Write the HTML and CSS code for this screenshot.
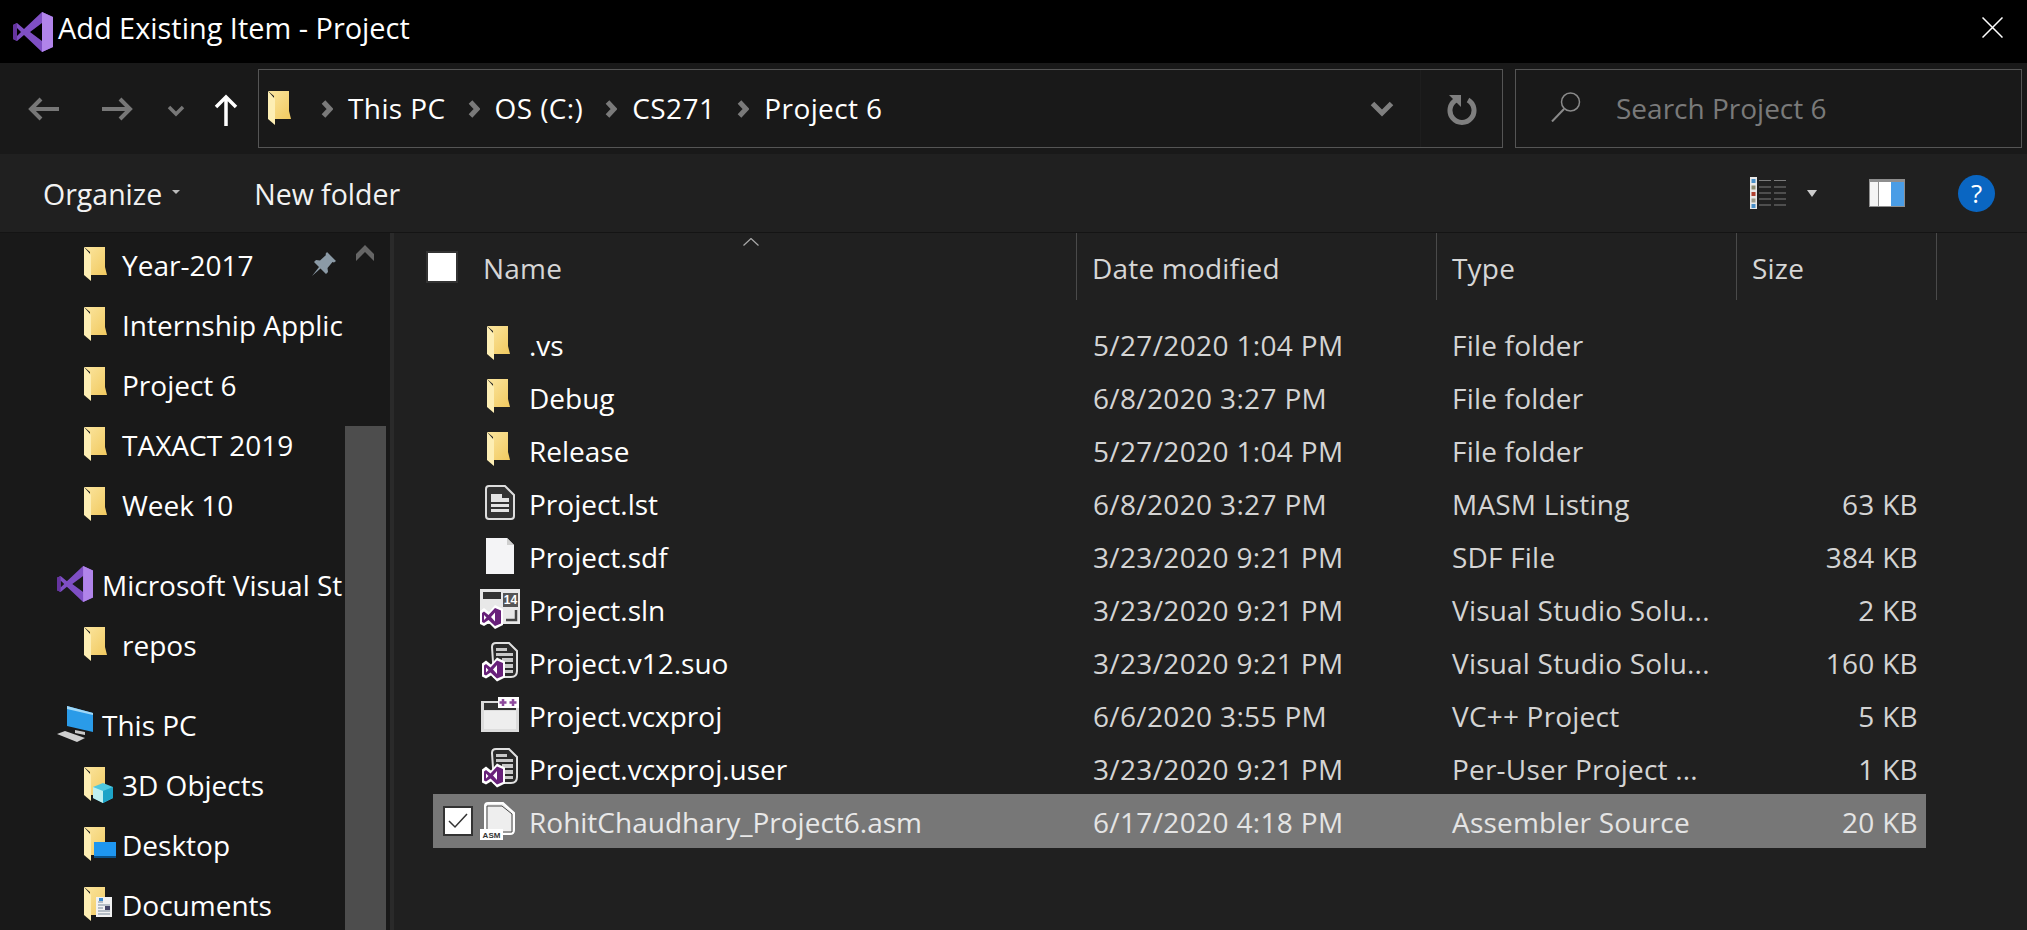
FILE: index.html
```html
<!DOCTYPE html>
<html lang="en">
<head>
<meta charset="utf-8">
<title>Add Existing Item - Project</title>
<link rel="stylesheet" href="styles.css">
</head>
<body>
<svg class="defs" width="0" height="0" aria-hidden="true">
  <defs>
    <linearGradient id="fg" x1="0" y1="0" x2="1" y2="1"><stop offset="0" stop-color="#fbe6a0"/><stop offset="1" stop-color="#f1c95f"/></linearGradient>
    <symbol id="folder" viewBox="0 0 23 35">
      <path d="M0 0H21V20L23 28H6V5Z" fill="url(#fg)"/>
      <path d="M0 0L7 8V34L0 28Z" fill="#fdeeb4"/>
    </symbol>
    <symbol id="vs" viewBox="0 0 40 40">
      <path d="M29 0L11 17L4 11L0 13V27L4 29L11 23L29 40L40 35V5ZM29 11V29L17 20ZM4 16L8 20L4 24Z" fill="#7f4fc4" fill-rule="evenodd"/>
      <path d="M0 13L4 11V29L0 27Z" fill="#65349f"/>
      <path d="M29 0L40 5V35L29 40Z" fill="#b184ea"/>
    </symbol>
    <symbol id="vsmall" viewBox="0 0 24 24">
      <path d="M15 0L23 4V20L15 24L9 18L4 21L0 19V6L4 3L9 7Z" fill="#fff"/>
      <path d="M15 3L21 5.500V18.500L15 21L8.500 15L4 18L2 17V8L4 6.500L8.500 10ZM15 7.500L11 12L15 16.500ZM4 10V15L6.500 12.500Z" fill="#68217a" fill-rule="evenodd"/>
    </symbol>
    <symbol id="vsdoc" viewBox="0 0 36 40">
      <path d="M10 5Q10 1 14 1H27L35 9V29Q35 35 29 35H12Z" fill="#2a2a2a" stroke="#e0e0e0" stroke-width="2"/>
      <path d="M14 6H25V9H14ZM14 11H31V14H14ZM20 16H31V20H20ZM20 22H31V26H20ZM20 28H31V31H20Z" fill="#c8c8c8"/>
      <use href="#vsmall" x="0" y="15" width="24" height="25"/>
    </symbol>
    <symbol id="sep" viewBox="0 0 12 18"><path d="M2.500 2L9 9L2.500 16" stroke="#7a7a7a" stroke-width="5" fill="none"/></symbol>
  </defs>
</svg>
<div class="window">
  <header class="titlebar">
    <svg class="title-logo"><use href="#vs"/></svg>
    <span class="title-text">Add Existing Item - Project</span>
    <svg class="close" viewBox="0 0 21 21"><path d="M.5 .5L20.500 20.500M20.500 .5L.5 20.500" stroke="#fff" stroke-width="1.500" fill="none"/></svg>
  </header>

  <nav class="addressbar">
    <svg class="nav nav-back" viewBox="0 0 31 24"><path d="M31 12H3M13 2L3 12L13 22" stroke="#777" stroke-width="4" fill="none"/></svg>
    <svg class="nav nav-forward" viewBox="0 0 31 24"><path d="M0 12H28M18 2L28 12L18 22" stroke="#777" stroke-width="4" fill="none"/></svg>
    <svg class="nav nav-recent" viewBox="0 0 18 12"><path d="M2 2L9 9L16 2" stroke="#777" stroke-width="3.500" fill="none"/></svg>
    <svg class="nav nav-up" viewBox="0 0 24 32"><path d="M12 32V3M2 13L12 3L22 13" stroke="#fff" stroke-width="3.500" fill="none"/></svg>
    <div class="crumbs">
      <svg class="crumb-folder"><use href="#folder"/></svg>
      <svg class="sep"><use href="#sep"/></svg>
      <span class="crumb">This PC</span>
      <svg class="sep"><use href="#sep"/></svg>
      <span class="crumb">OS (C:)</span>
      <svg class="sep"><use href="#sep"/></svg>
      <span class="crumb">CS271</span>
      <svg class="sep"><use href="#sep"/></svg>
      <span class="crumb">Project 6</span>
      <span class="crumb-drop"><svg class="crumb-chevron" viewBox="0 0 24 16"><path d="M2.500 2.500L12 12L21.500 2.500" stroke="#7f7f7f" stroke-width="5" fill="none"/></svg></span>
      <span class="crumb-refresh"><svg class="refresh" viewBox="0 0 30 32"><path d="M9 7A12 12 0 1 0 21 7" stroke="#7f7f7f" stroke-width="5" fill="none"/><path d="M2 2H14V14Z" fill="#7f7f7f"/></svg></span>
    </div>
    <div class="search">
      <svg class="search-icon" viewBox="0 0 30 30"><circle cx="19.500" cy="10" r="9" stroke="#8a8a8a" stroke-width="1.500" fill="none"/><path d="M13 17L1 29.500" stroke="#8a8a8a" stroke-width="2" fill="none"/></svg>
      <span class="search-text">Search Project 6</span>
    </div>
  </nav>

  <div class="toolbar">
    <span class="tool-btn">Organize</span>
    <svg class="tool-caret" viewBox="0 0 8 4"><path d="M0 0H8L4 4Z" fill="#bbb"/></svg>
    <span class="tool-btn tool-new">New folder</span>
    <svg class="view-icon" viewBox="0 0 36 32">
      <rect x="0" y="0" width="7" height="32" fill="#e8e8e8"/>
      <rect x="1.500" y="2" width="4" height="4" fill="#4a90c8"/><rect x="1.500" y="8.500" width="4" height="4" fill="#8a8a70"/><rect x="1.500" y="15" width="4" height="4" fill="#b04030"/><rect x="1.500" y="21.500" width="4" height="4" fill="#9a9a8a"/><rect x="1.500" y="27" width="4" height="4" fill="#4a90c8"/>
      <path d="M9 3.500H21M24 3.500H36M9 10H21M24 10H36M9 16H21M24 16H36M9 22H21M24 22H36M9 28H21M24 28H36" stroke="#7c7c7c" stroke-width="1.200"/>
    </svg>
    <svg class="view-caret" viewBox="0 0 10 7"><path d="M0 0H10L5 7Z" fill="#ccc"/></svg>
    <svg class="pane-icon" viewBox="0 0 36 28">
      <rect width="36" height="28" fill="#8e8e8e"/>
      <rect x="1" y="3" width="8" height="24" fill="#f4f4f4"/>
      <rect x="10" y="3" width="12" height="24" fill="#fff"/>
      <rect x="22" y="3" width="13" height="24" fill="#4a9de6"/>
    </svg>
    <span class="help">?</span>
  </div>

  <div class="content">
    <aside class="sidebar">
      <div class="tree">
        <div class="tree-item"><svg class="tree-folder"><use href="#folder"/></svg><span class="tree-label">Year-2017</span></div>
        <div class="tree-item"><svg class="tree-folder"><use href="#folder"/></svg><span class="tree-label">Internship Applic</span></div>
        <div class="tree-item"><svg class="tree-folder"><use href="#folder"/></svg><span class="tree-label">Project 6</span></div>
        <div class="tree-item"><svg class="tree-folder"><use href="#folder"/></svg><span class="tree-label">TAXACT 2019</span></div>
        <div class="tree-item"><svg class="tree-folder"><use href="#folder"/></svg><span class="tree-label">Week 10</span></div>
        <div class="tree-item tree-group"><svg class="tree-head"><use href="#vs"/></svg><span class="tree-label">Microsoft Visual St</span></div>
        <div class="tree-item"><svg class="tree-folder"><use href="#folder"/></svg><span class="tree-label">repos</span></div>
        <div class="tree-item tree-group">
          <svg class="tree-head" viewBox="0 0 36 36">
            <path d="M10 0L36 7V26L10 20Z" fill="#2a9be8"/><path d="M10 0L36 7V9L10 3Z" fill="#9fd8f8"/>
            <path d="M18 24L28 26V29L18 27Z" fill="#c8c8c8"/><path d="M0 28L8 25L28 32L20 36Z" fill="#cfcfcf"/>
          </svg>
          <span class="tree-label">This PC</span>
        </div>
        <div class="tree-item">
          <span class="badge-wrap"><svg class="tree-folder"><use href="#folder"/></svg>
            <svg class="badge badge-cube" viewBox="0 0 20 20"><path d="M10 0L20 4V15L10 20L0 15V4Z" fill="#4ec8e0"/><path d="M0 4L10 8V20L0 15Z" fill="#bff0f0"/><path d="M10 8L20 4V15L10 20Z" fill="#1da4c8"/></svg>
          </span><span class="tree-label">3D Objects</span></div>
        <div class="tree-item">
          <span class="badge-wrap"><svg class="tree-folder"><use href="#folder"/></svg>
            <svg class="badge badge-desk" viewBox="0 0 22 16"><rect width="22" height="16" fill="#1e96f0"/><rect y="14" width="22" height="2" fill="#0a4f86"/></svg>
          </span><span class="tree-label">Desktop</span></div>
        <div class="tree-item">
          <span class="badge-wrap"><svg class="tree-folder"><use href="#folder"/></svg>
            <svg class="badge badge-doc" viewBox="0 0 16 20"><rect width="16" height="20" fill="#f2f2f2"/><path d="M2 5H7M2 8H14M2 11H7M2 14H14M2 17H14" stroke="#7a8a9a"/><rect x="9" y="9" width="5" height="4" fill="#446"/><rect x="3" y="1" width="4" height="3" fill="#3a8ad0"/></svg>
          </span><span class="tree-label">Documents</span></div>
      </div>
      <svg class="pin" viewBox="0 0 26 26"><path d="M16 1L25 10L23 11.500L21.500 11L16.500 17L17 21L15 23L9.500 17.500L1 25L8 16L3 11L5 9L9 9.500L15 4L14.500 3Z" fill="#8b9aa6"/></svg>
      <div class="scrollbar">
        <div class="scroll-track"><svg class="scroll-up" viewBox="0 0 18 16"><path d="M9 0L18 9V16L9 7L0 16V9Z" fill="#666"/></svg></div>
        <div class="scroll-thumb"></div>
      </div>
    </aside>
    <div class="splitter"></div>
    <main class="files">
      <div class="file-head">
        <div class="col col-name"><span class="head-check"></span><span class="head-label">Name</span></div>
        <div class="col col-date"><span class="head-label">Date modified</span></div>
        <div class="col col-type"><span class="head-label">Type</span></div>
        <div class="col col-size"><span class="head-label">Size</span></div>
        <svg class="sort" viewBox="0 0 16 8"><path d="M.5 7.500L8 .5L15.500 7.500" stroke="#aaa" stroke-width="1.200" fill="none"/></svg>
      </div>
      <div class="rows">
        <div class="row"><span></span><span class="ico"><svg class="i-folder"><use href="#folder"/></svg></span><span class="name">.vs</span><span class="cell">5/27/2020 1:04 PM</span><span class="cell type">File folder</span><span class="sz"></span></div>
        <div class="row"><span></span><span class="ico"><svg class="i-folder"><use href="#folder"/></svg></span><span class="name">Debug</span><span class="cell">6/8/2020 3:27 PM</span><span class="cell type">File folder</span><span class="sz"></span></div>
        <div class="row"><span></span><span class="ico"><svg class="i-folder"><use href="#folder"/></svg></span><span class="name">Release</span><span class="cell">5/27/2020 1:04 PM</span><span class="cell type">File folder</span><span class="sz"></span></div>
        <div class="row"><span></span><span class="ico"><svg class="i-lst" viewBox="0 0 30 35"><path d="M4 1H20L29 10V31Q29 34 26 34H4Q1 34 1 31V4Q1 1 4 1Z" fill="#333" stroke="#ddd" stroke-width="2"/><path d="M6 9H17V13H24V17H6ZM6 19H24V22H6ZM6 24H24V27H6Z" fill="#e4e4e4" fill-rule="evenodd"/></svg></span><span class="name">Project.lst</span><span class="cell">6/8/2020 3:27 PM</span><span class="cell type">MASM Listing</span><span class="sz">63 KB</span></div>
        <div class="row"><span></span><span class="ico"><svg class="i-sdf" viewBox="0 0 28 36"><path d="M0 0H21L28 7V36H0Z" fill="#f4f4f6"/><path d="M21 0L28 7H21Z" fill="#cfcfcf"/></svg></span><span class="name">Project.sdf</span><span class="cell">3/23/2020 9:21 PM</span><span class="cell type">SDF File</span><span class="sz">384 KB</span></div>
        <div class="row"><span></span><span class="ico"><svg class="i-sln" viewBox="0 0 40 40"><rect width="40" height="35" fill="#e8e8e8"/><rect x="3" y="3" width="18" height="7" fill="#333"/><rect x="23" y="4" width="15" height="14" fill="#555"/><text class="sln-num" x="30.500" y="15" text-anchor="middle">14</text><path d="M26 31H36V21" stroke="#444" stroke-width="2.500" fill="none"/><use href="#vsmall" x="0" y="16" width="24" height="24"/></svg></span><span class="name">Project.sln</span><span class="cell">3/23/2020 9:21 PM</span><span class="cell type">Visual Studio Solu...</span><span class="sz">2 KB</span></div>
        <div class="row"><span></span><span class="ico"><svg class="i-suo"><use href="#vsdoc"/></svg></span><span class="name">Project.v12.suo</span><span class="cell">3/23/2020 9:21 PM</span><span class="cell type">Visual Studio Solu...</span><span class="sz">160 KB</span></div>
        <div class="row"><span></span><span class="ico"><svg class="i-vcx" viewBox="0 0 38 35"><rect x="0" y="4" width="38" height="31" fill="#ddd"/><rect x="3" y="6" width="32" height="7" fill="#333"/><rect x="3" y="14" width="32" height="18" fill="#eee"/><rect x="17" y="0" width="21" height="11" fill="#fff"/><path d="M22 2V9M18.500 5.500H25.500M32 2V9M28.500 5.500H35.500" stroke="#8d4a9d" stroke-width="2.500"/></svg></span><span class="name">Project.vcxproj</span><span class="cell">6/6/2020 3:55 PM</span><span class="cell type">VC++ Project</span><span class="sz">5 KB</span></div>
        <div class="row"><span></span><span class="ico"><svg class="i-suo"><use href="#vsdoc"/></svg></span><span class="name">Project.vcxproj.user</span><span class="cell">3/23/2020 9:21 PM</span><span class="cell type">Per-User Project ...</span><span class="sz">1 KB</span></div>
        <div class="row row-selected"><span class="row-check"><svg class="check" viewBox="0 0 20 16"><path d="M1 8L7 14L19 1" stroke="#333" stroke-width="1.500" fill="none"/></svg></span><span class="ico"><svg class="i-asm" viewBox="0 0 35 38"><path d="M5 4Q5 1 8 1H23L34 11V28Q34 32 30 32H5Z" fill="#eee" stroke="#fff" stroke-width="2"/><path d="M7 4H22L32 12V30H7Z" fill="#eee" stroke="#444" stroke-width="1"/><rect x="0" y="27" width="23" height="11" fill="#fff"/><text class="asm-label" x="11.500" y="36">ASM</text></svg></span><span class="name">RohitChaudhary_Project6.asm</span><span class="cell">6/17/2020 4:18 PM</span><span class="cell type">Assembler Source</span><span class="sz">20 KB</span></div>
      </div>
    </main>
  </div>
</div>
</body>
</html>
```
FILE: styles.css
```css
* { box-sizing: border-box; }
html, body { margin: 0; padding: 0; height: 100%; background: #000; }
body { font-family: "Open Sans", "Liberation Sans", sans-serif; overflow: hidden; }
.defs { position: absolute; }
svg { display: block; flex: none; }

.window { width: 2027px; height: 930px; display: flex; flex-direction: column; color: #fff; font-size: 28px; }

.titlebar { height: 63px; flex: none; background: #000; display: flex; align-items: center; padding-left: 13px; }
.title-logo { width: 40px; height: 40px; margin-right: 5px; }
.title-text { flex: 1; font-size: 28.9px; margin-top: -8px; }
.close { width: 21px; height: 21px; margin-right: 24px; margin-top: -9px; }

.addressbar { height: 91px; flex: none; background: #191919; display: flex; align-items: center; padding-left: 28px; padding-right: 5px; }
.nav-back { width: 31px; height: 24px; }
.nav-forward { width: 31px; height: 24px; margin-left: 43px; }
.nav-recent { width: 18px; height: 12px; margin-left: 34px; margin-top: 4px; }
.nav-up { width: 24px; height: 32px; margin-left: 29px; margin-top: 3px; }
.crumbs { width: 1245px; height: 79px; margin-left: 20px; border: 1.500px solid #555; display: flex; align-items: center; padding-left: 9px; }
.crumb-folder { width: 23px; height: 35px; margin-right: 30px; }
.sep { width: 12px; height: 18px; margin: 0 14px 0 0; }
.crumb { margin-right: 22px; color: #fff; letter-spacing: 0.4px; margin-top: -2px; }
.sep + .crumb { margin-left: 1px; }
.crumb-drop { margin-left: auto; width: 81px; height: 100%; display: flex; align-items: center; justify-content: center; border-right: 1px solid #1e1e1e; padding-left: 3px; }
.crumb-chevron { width: 24px; height: 16px; }
.crumb-refresh { width: 81px; height: 100%; display: flex; align-items: center; justify-content: center; }
.refresh { width: 30px; height: 32px; }
.search { width: 507px; height: 79px; margin-left: 12px; border: 1.500px solid #555; display: flex; align-items: center; padding-left: 35px; }
.search-icon { width: 30px; height: 30px; margin-right: 35px; margin-top: -3px; }
.search-text { color: #7a7a7a; margin-top: -2px; }

.toolbar { height: 79px; flex: none; background: #202020; display: flex; align-items: center; padding-left: 43px; border-bottom: 1px solid #141414; font-size: 28.5px; }
.tool-btn { color: #f2f2f2; padding-top: 2px; }
.tool-caret { width: 8px; height: 4px; margin-left: 10px; margin-top: -3px; }
.tool-new { margin-left: 74px; }
.view-icon { width: 36px; height: 32px; margin-left: auto; }
.view-caret { width: 10px; height: 7px; margin-left: 21px; }
.pane-icon { width: 36px; height: 28px; margin-left: 52px; }
.help { width: 37px; height: 37px; margin: 0 32px 0 53px; border-radius: 50%; background: #0a66c2; color: #fff; display: flex; align-items: center; justify-content: center; font-size: 26px; }

.content { flex: 1; min-height: 0; display: flex; }
.sidebar { width: 390px; flex: none; background: #191919; position: relative; overflow: hidden; display: flex; }
.tree { width: 345px; overflow: hidden; padding-top: 1px; }
.tree-item { height: 60px; display: flex; align-items: center; padding-left: 84px; white-space: nowrap; overflow: hidden; }
.tree-group { margin-top: 20px; padding-left: 57px; }
.tree-folder { width: 23px; height: 35px; }
.badge-wrap { position: relative; display: block; }
.badge { position: absolute; }
.badge-cube { width: 20px; height: 20px; left: 9px; top: 16px; }
.badge-desk { width: 22px; height: 16px; left: 10px; top: 15px; }
.badge-doc { width: 16px; height: 20px; left: 12px; top: 10px; }
.tree-label { margin-left: 15px; color: #fff; padding-top: 1px; }
.tree-head { width: 36px; height: 36px; margin-right: 9px; }
.tree-group .tree-label { margin-left: 0; }
.pin { position: absolute; left: 311px; top: 18px; width: 26px; height: 26px; }
.scrollbar { width: 41px; flex: none; display: flex; flex-direction: column; background: #191919; }
.scroll-track { height: 193px; padding: 12px 0 0 11px; flex: none; }
.scroll-up { width: 18px; height: 16px; }
.scroll-thumb { flex: 1; background: #4d4d4d; }
.splitter { width: 4px; flex: none; background: #2a2a2a; }

.files { flex: 1; background: #202020; min-width: 0; }
.file-head { height: 67px; display: flex; position: relative; color: #d6d6d6; letter-spacing: 0.2px; }
.col { height: 67px; display: flex; align-items: center; border-right: 1.500px solid #4a4a4a; }
.col-name { width: 683px; padding-left: 32px; }
.col-date { width: 360px; padding-left: 15px; }
.col-type { width: 300px; padding-left: 15px; }
.col-size { width: 200px; padding-left: 15px; }
.head-label { padding-top: 3px; }
.head-check { width: 32px; height: 32px; background: #fff; border: 2px solid #333; margin-right: 25px; }
.sort { position: absolute; left: 349px; top: 5px; width: 16px; height: 8px; }

.rows { margin: 17px 0 0 39px; width: 1493px; }
.row { height: 53px; display: grid; grid-template-columns: 44px 52px 564px 359px 300px 166px; align-items: center; white-space: nowrap; color: #d4d4d4; }
.ico { width: 44px; display: flex; justify-content: center; align-items: center; }
.name { color: #fff; padding-top: 2px; }
.cell { letter-spacing: 0.35px; padding-top: 2px; }
.type { letter-spacing: 0.2px; }
.sz { text-align: right; letter-spacing: 0.3px; padding-top: 2px; }
.i-folder { width: 23px; height: 35px; margin-left: -1px; }
.i-lst { width: 30px; height: 35px; margin-left: 2px; }
.i-sdf { width: 28px; height: 36px; margin-left: 2px; }
.i-sln { width: 40px; height: 40px; margin-left: 2px; }
.i-suo { width: 36px; height: 40px; margin-left: 2px; }
.i-vcx { width: 38px; height: 35px; margin-left: 2px; }
.i-asm { width: 35px; height: 38px; margin-left: -3px; }
.sln-num { font: 700 12px "Liberation Sans", sans-serif; fill: #fff; letter-spacing: 0; }
.asm-label { font: 700 8px "Liberation Sans", sans-serif; fill: #333; text-anchor: middle; letter-spacing: 0; }
.row-selected { background: #777; color: #e4e4e4; height: 54px; }
.row-selected .name { color: #e8e8e8; }
.row-check { width: 30px; height: 30px; margin-left: 10px; background: #fff; border: 2px solid #333; display: flex; align-items: center; justify-content: center; }
.check { width: 20px; height: 16px; }
```
